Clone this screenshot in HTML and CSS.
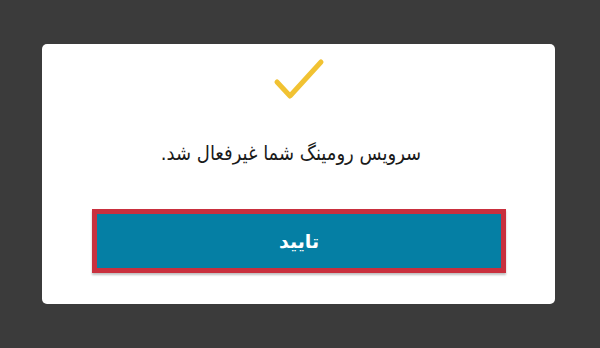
FILE: index.html
```html
<!DOCTYPE html>
<html lang="fa" dir="rtl">
<head>
    <meta charset="UTF-8">
    <title>رومینگ</title>
    <link rel="stylesheet" href="styles.css">
</head>
<body>
    <div class="dialog">
        <svg class="check-icon" width="60" height="50" viewBox="0 0 60 50">
            <polyline points="6,25 19,39 50,5" fill="none" stroke="#f1c232" stroke-width="5" stroke-linecap="round" stroke-linejoin="round"/>
        </svg>
        <p class="message">سرویس رومینگ شما غیرفعال شد.</p>
        <button class="confirm-btn">تایید</button>
    </div>
</body>
</html>
```

FILE: styles.css
```css
* {
    box-sizing: border-box;
}

/* Body */
body {
    margin: 0;
    height: 348px;
    padding: 44px 45px 44px 42px;
    background-color: #3b3b3b;
    font-family: 'DejaVu Sans', sans-serif;
}

/* Dialog card */
.dialog {
    height: 260px;
    background-color: #ffffff;
    border-radius: 5px;
    display: flex;
    flex-direction: column;
    align-items: center;
    padding: 13px 49px 0 50px;
}

.check-icon {
    display: block;
    margin-left: 4px;
}

/* Message */
.message {
    margin: 33px 16px 0 0;
    font-family: 'DejaVu Sans Condensed', 'DejaVu Sans', sans-serif;
    font-size: 20px;
    line-height: 26px;
    color: #1a1a1a;
}

/* Confirm Button */
.confirm-btn {
    margin-top: 43px;
    width: 100%;
    height: 64px;
    background-color: #057fa4;
    border: 5px solid #c9303e;
    color: #ffffff;
    font-family: 'DejaVu Sans', sans-serif;
    font-size: 19px;
    font-weight: bold;
    box-shadow: 0 2px 2px rgba(0, 0, 0, 0.25);
    cursor: pointer;
}
```
